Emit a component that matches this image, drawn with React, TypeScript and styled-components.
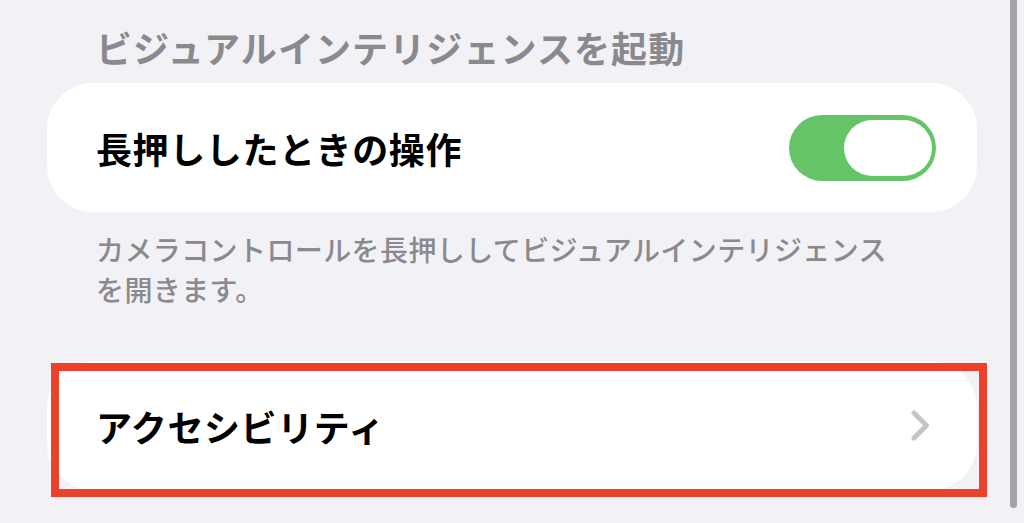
import React from "react";
import styled, { createGlobalStyle } from "styled-components";

const Global = createGlobalStyle`
  html, body { margin: 0; padding: 0; background: #f2f1f6; }
  body { width: 1024px; height: 523px; overflow: hidden; }
  * { box-sizing: border-box; }
`;

const Page = styled.div`
  position: relative;
  width: 1024px;
  height: 523px;
  background: #f2f1f6;
  padding: 23px 0 0 47px;
  font-family: "Noto Sans CJK JP", "Noto Sans", sans-serif;
`;

const SectionHeader = styled.div`
  padding-left: 49px;
  font-size: 36px;
  line-height: 48px;
  font-weight: 700;
  color: #8a8a8e;
  letter-spacing: 1.1px;
  margin-bottom: 12px;
`;

const Card = styled.div<{ $padRight: number }>`
  width: 930px;
  height: 129px;
  background: #ffffff;
  border-radius: 46px;
  display: flex;
  align-items: center;
  justify-content: space-between;
  padding: 0 ${(p) => p.$padRight}px 0 49px;
`;

const RowLabel = styled.span`
  font-size: 36px;
  line-height: 48px;
  font-weight: 700;
  color: #000000;
  letter-spacing: 0.6px;
`;

const Toggle = styled.div`
  width: 147px;
  height: 66px;
  border-radius: 33px;
  background: #65c466;
  display: flex;
  align-items: center;
  justify-content: flex-end;
  padding-right: 4px;
`;

const Knob = styled.div`
  width: 88px;
  height: 56px;
  border-radius: 28px;
  background: #ffffff;
`;

const Footer = styled.p`
  margin: 17px 0 0 0;
  padding-left: 49px;
  width: 850px;
  font-size: 28px;
  line-height: 40px;
  font-weight: 500;
  color: #8a8a8e;
  letter-spacing: 0.4px;
`;

const Highlighted = styled.div`
  position: relative;
  margin-top: 52px;
  width: 930px;
`;

const RedFrame = styled.div`
  position: absolute;
  left: 4px;
  top: 2px;
  right: -10px;
  bottom: -7px;
  border: 8px solid #e9412a;
  pointer-events: none;
`;

const Scrollbar = styled.div`
  position: absolute;
  left: 1010px;
  top: -10px;
  width: 7px;
  height: 518px;
  border-radius: 4px;
  background: #a2a2a7;
`;

const Chevron = () => (
  <svg width="19" height="31" viewBox="0 0 19 31" fill="none">
    <polyline
      points="3,3 15.5,15.5 3,28"
      stroke="#c4c4c7"
      strokeWidth="5"
      strokeLinecap="round"
      strokeLinejoin="round"
    />
  </svg>
);

export default function App() {
  return (
    <>
      <Global />
      <Page>
        <SectionHeader>ビジュアルインテリジェンスを起動</SectionHeader>
        <Card $padRight={41}>
          <RowLabel>長押ししたときの操作</RowLabel>
          <Toggle>
            <Knob />
          </Toggle>
        </Card>
        <Footer>
          カメラコントロールを長押ししてビジュアルインテリジェンスを開きます。
        </Footer>
        <Highlighted>
          <Card $padRight={47}>
            <RowLabel>アクセシビリティ</RowLabel>
            <Chevron />
          </Card>
          <RedFrame />
        </Highlighted>
        <Scrollbar />
      </Page>
    </>
  );
}
